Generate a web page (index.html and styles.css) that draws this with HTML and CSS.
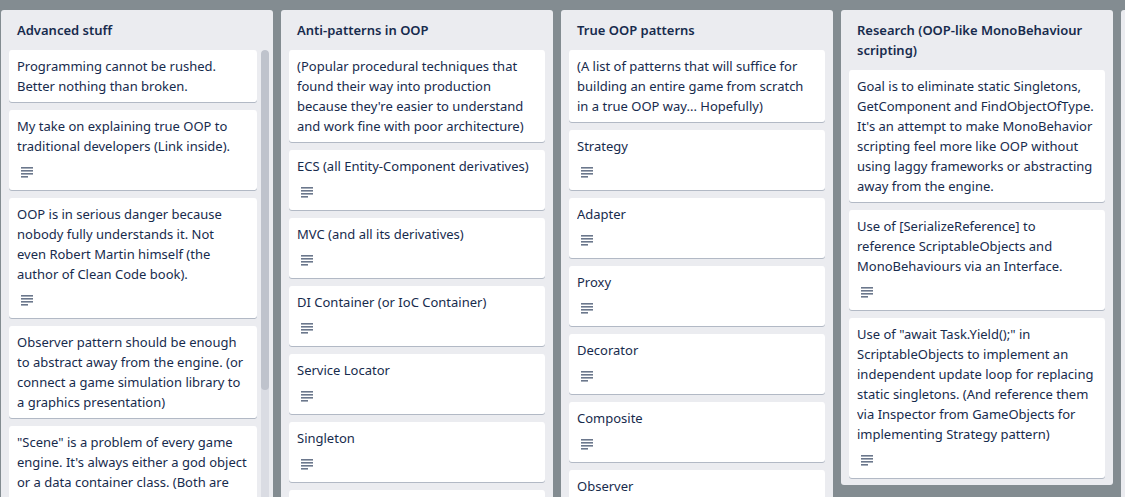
FILE: index.html
```html
<!DOCTYPE html>
<html lang="en">
<head>
<meta charset="utf-8">
<title>Board</title>
<link rel="stylesheet" href="styles.css">
</head>
<body>
<svg width="0" height="0" class="defs">
  <defs>
    <symbol id="desc" viewBox="0 0 12 11">
      <rect x="0" y="0" width="12" height="1.6" />
      <rect x="0" y="3" width="12" height="1.6" />
      <rect x="0" y="6" width="12" height="1.6" />
      <rect x="0" y="9" width="7" height="1.6" />
    </symbol>
  </defs>
</svg>
<div class="board">
  <section class="list list-scroll">
    <h2 class="list-title">Advanced stuff</h2>
    <div class="list-body">
      <div class="cards">
        <div class="card"><p class="card-title">Programming cannot be rushed.<br>Better nothing than broken.</p></div>
        <div class="card"><p class="card-title">My take on explaining true OOP to<br>traditional developers (Link inside).</p><div class="badges"><svg class="icon"><use href="#desc"/></svg></div></div>
        <div class="card"><p class="card-title">OOP is in serious danger because<br>nobody fully understands it. Not<br>even Robert Martin himself (the<br>author of Clean Code book).</p><div class="badges"><svg class="icon"><use href="#desc"/></svg></div></div>
        <div class="card"><p class="card-title">Observer pattern should be enough<br>to abstract away from the engine. (or<br>connect a game simulation library to<br>a graphics presentation)</p></div>
        <div class="card"><p class="card-title">"Scene" is a problem of every game<br>engine. It's always either a god object<br>or a data container class. (Both are<br>anti-patterns)</p></div>
      </div>
      <div class="scrollbar"><div class="thumb"></div></div>
    </div>
  </section>

  <section class="list">
    <h2 class="list-title">Anti-patterns in OOP</h2>
    <div class="cards">
      <div class="card"><p class="card-title">(Popular procedural techniques that<br>found their way into production<br>because they're easier to understand<br>and work fine with poor architecture)</p></div>
      <div class="card"><p class="card-title">ECS (all Entity-Component derivatives)</p><div class="badges"><svg class="icon"><use href="#desc"/></svg></div></div>
      <div class="card"><p class="card-title">MVC (and all its derivatives)</p><div class="badges"><svg class="icon"><use href="#desc"/></svg></div></div>
      <div class="card"><p class="card-title">DI Container (or IoC Container)</p><div class="badges"><svg class="icon"><use href="#desc"/></svg></div></div>
      <div class="card"><p class="card-title">Service Locator</p><div class="badges"><svg class="icon"><use href="#desc"/></svg></div></div>
      <div class="card"><p class="card-title">Singleton</p><div class="badges"><svg class="icon"><use href="#desc"/></svg></div></div>
      <div class="card card-blank"></div>
    </div>
  </section>

  <section class="list">
    <h2 class="list-title">True OOP patterns</h2>
    <div class="cards">
      <div class="card"><p class="card-title">(A list of patterns that will suffice for<br>building an entire game from scratch<br>in a true OOP way... Hopefully)</p></div>
      <div class="card"><p class="card-title">Strategy</p><div class="badges"><svg class="icon"><use href="#desc"/></svg></div></div>
      <div class="card"><p class="card-title">Adapter</p><div class="badges"><svg class="icon"><use href="#desc"/></svg></div></div>
      <div class="card"><p class="card-title">Proxy</p><div class="badges"><svg class="icon"><use href="#desc"/></svg></div></div>
      <div class="card"><p class="card-title">Decorator</p><div class="badges"><svg class="icon"><use href="#desc"/></svg></div></div>
      <div class="card"><p class="card-title">Composite</p><div class="badges"><svg class="icon"><use href="#desc"/></svg></div></div>
      <div class="card"><p class="card-title">Observer</p><div class="badges"><svg class="icon"><use href="#desc"/></svg></div></div>
    </div>
  </section>

  <section class="list">
    <h2 class="list-title">Research (OOP-like MonoBehaviour<br>scripting)</h2>
    <div class="cards cards-end">
      <div class="card"><p class="card-title">Goal is to eliminate static Singletons,<br>GetComponent and FindObjectOfType.<br>It's an attempt to make MonoBehavior<br>scripting feel more like OOP without<br>using laggy frameworks or abstracting<br>away from the engine.</p></div>
      <div class="card"><p class="card-title">Use of [SerializeReference] to<br>reference ScriptableObjects and<br>MonoBehaviours via an Interface.</p><div class="badges"><svg class="icon"><use href="#desc"/></svg></div></div>
      <div class="card"><p class="card-title">Use of "await Task.Yield();" in<br>ScriptableObjects to implement an<br>independent update loop for replacing<br>static singletons. (And reference them<br>via Inspector from GameObjects for<br>implementing Strategy pattern)</p><div class="badges"><svg class="icon"><use href="#desc"/></svg></div></div>
    </div>
  </section>

  <section class="list list-tall"></section>
</div>
</body>
</html>
```
FILE: styles.css
```css
* { box-sizing: border-box; }

html, body {
  margin: 0;
  padding: 0;
  height: 100%;
}

body {
  background: #838c91;
  font-family: "Noto Sans", "Open Sans", sans-serif;
  font-size: 13px;
  line-height: 20px;
  color: #172b4d;
  overflow: hidden;
}

.defs {
  position: absolute;
  width: 0;
  height: 0;
}

.board {
  display: flex;
  align-items: flex-start;
  gap: 8px;
  padding: 10px 0 0 1px;
  height: 497px;
  overflow: hidden;
}

.list {
  flex: 0 0 272px;
  width: 272px;
  background: #ebecf0;
  border-radius: 3px;
  display: flex;
  flex-direction: column;
}

.list-title {
  margin: 0;
  padding: 10px 16px;
  font-size: 13px;
  line-height: 20px;
  font-weight: 600;
  color: #172b4d;
  white-space: nowrap;
}

.list-body {
  display: flex;
  gap: 4px;
  padding: 0 4px 0 8px;
}

.list-body .cards {
  padding: 0;
  flex: 0 0 248px;
}

.cards {
  display: flex;
  flex-direction: column;
  gap: 8px;
  padding: 0 8px;
}

.cards-end {
  padding-bottom: 7px;
}

.list-tall {
  height: 600px;
}

.scrollbar {
  flex: 0 0 8px;
  width: 8px;
  height: 520px;
  background: #dadce3;
  border-radius: 4px;
  overflow: hidden;
}

.thumb {
  height: 340px;
  background: #bfc3cc;
  border-radius: 4px;
}

.card {
  background: #fff;
  border-radius: 3px;
  box-shadow: 0 1px 0 rgba(9, 30, 66, 0.25);
  padding: 6px 8px 2px;
}

.card-blank {
  height: 60px;
}

.card-title {
  margin: 0 0 4px;
  white-space: nowrap;
  overflow: hidden;
}

.badges {
  height: 24px;
  margin-bottom: 4px;
  display: flex;
  align-items: center;
  padding-left: 4px;
}

.icon {
  width: 12px;
  height: 11px;
  fill: #6b778c;
}
```
